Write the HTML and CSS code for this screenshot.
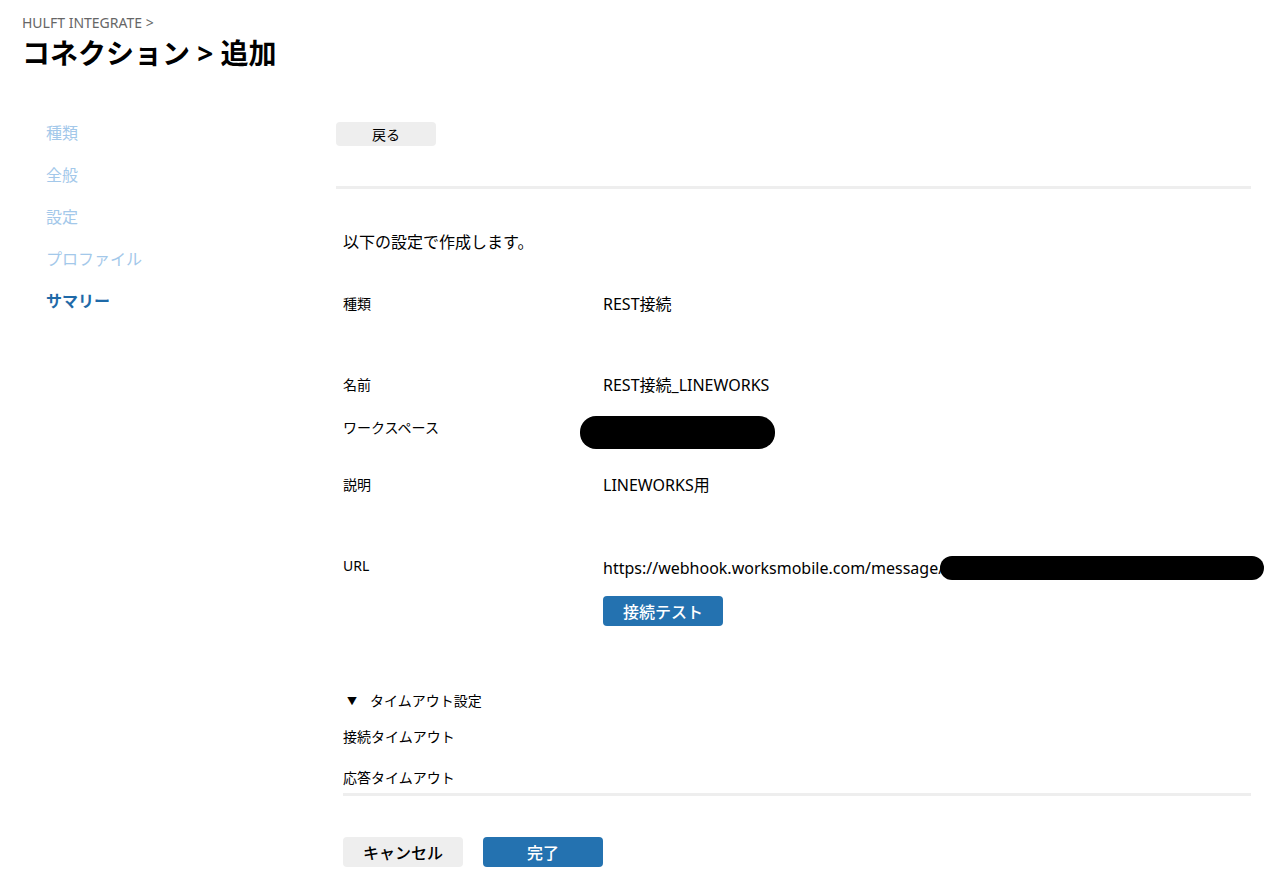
FILE: index.html
```html
<!DOCTYPE html>
<html lang="ja">
<head>
    <meta charset="UTF-8">
    <title>コネクション > 追加</title>
    <link rel="stylesheet" href="styles.css">
</head>
<body>
    <!-- Nagłówek -->
    <header class="page-header">
        <div class="breadcrumb">HULFT INTEGRATE &gt;</div>
        <h1 class="page-title">コネクション &gt; 追加</h1>
    </header>

    <div class="layout">
        <!-- Kroki -->
        <nav class="steps">
            <div class="step">種類</div>
            <div class="step">全般</div>
            <div class="step">設定</div>
            <div class="step">プロファイル</div>
            <div class="step step-active">サマリー</div>
        </nav>

        <main class="content">
            <button class="btn btn-gray btn-back">戻る</button>
            <hr class="divider">

            <section class="summary">
                <p class="intro">以下の設定で作成します。</p>

                <div class="row row-first">
                    <div class="label">種類</div>
                    <div class="value">REST接続</div>
                </div>
                <div class="row row-wide">
                    <div class="label">名前</div>
                    <div class="value">REST接続_LINEWORKS</div>
                </div>
                <div class="row row-workspace">
                    <div class="label">ワークスペース</div>
                    <div class="value"><span class="masked masked-workspace"></span></div>
                </div>
                <div class="row row-desc">
                    <div class="label">説明</div>
                    <div class="value">LINEWORKS用</div>
                </div>
                <div class="row row-wide">
                    <div class="label">URL</div>
                    <div class="value">
                        <div class="url">https://webhook.worksmobile.com/message/<span class="masked masked-url"></span></div>
                        <button class="btn btn-blue btn-test">接続テスト</button>
                    </div>
                </div>

                <div class="timeout-toggle"><span class="caret">▼</span>タイムアウト設定</div>
                <div class="timeout-item">接続タイムアウト</div>
                <div class="timeout-item timeout-item-last">応答タイムアウト</div>
                <hr class="divider divider-bottom">

                <div class="actions">
                    <button class="btn btn-gray btn-action">キャンセル</button>
                    <button class="btn btn-blue btn-action">完了</button>
                </div>
            </section>
        </main>
    </div>
</body>
</html>
```

FILE: styles.css
```css
/* Styl ogólny */
body {
    margin: 0;
    font-family: "Noto Sans", "Noto Sans CJK JP", sans-serif;
    background-color: #ffffff;
    color: #000000;
}

/* Nagłówek */
.page-header {
    padding: 14px 0 0 22px;
}

.breadcrumb {
    font-size: 14px;
    line-height: 18px;
    color: #666666;
}

.page-title {
    margin: 3px 0 0;
    font-size: 28px;
    line-height: 36px;
    font-weight: bold;
}

/* Układ */
.layout {
    display: flex;
    margin-top: 51px;
}

.steps {
    width: 290px;
    padding-left: 46px;
    flex-shrink: 0;
}

.step {
    font-size: 16px;
    line-height: 22px;
    margin-bottom: 20px;
    color: #a3c8ea;
}

.step-active {
    color: #1f6aa8;
    font-weight: bold;
}

.content {
    flex: 1;
    min-width: 0;
    margin-right: 31px;
}

/* Przyciski */
.btn {
    border: none;
    border-radius: 4px;
    font-family: inherit;
    padding: 0;
    cursor: pointer;
}

.btn-gray {
    background-color: #eeeeee;
    color: #000000;
}

.btn-blue {
    background-color: #2472b0;
    color: #ffffff;
}

.btn-back {
    width: 100px;
    height: 24px;
    font-size: 14px;
    display: block;
}

.divider {
    margin: 40px 0 0;
    border: none;
    height: 3px;
    background-color: #eeeeee;
}

/* Podsumowanie */
.summary {
    padding-left: 7px;
}

.intro {
    margin: 43px 0 0;
    font-size: 16px;
    line-height: 20px;
}

.row {
    display: grid;
    grid-template-columns: 260px 1fr;
    align-items: start;
}

.row-first {
    margin-top: 42px;
}

.row-wide {
    margin-top: 61px;
}

.row-workspace {
    margin-top: 21px;
}

.row-desc {
    margin-top: 26px;
}

.label {
    font-size: 14px;
    line-height: 20px;
}

.row-workspace .label {
    margin-top: 2px;
}

.value {
    font-size: 16px;
    line-height: 20px;
}

.url {
    white-space: nowrap;
    height: 20px;
}

.masked {
    display: inline-block;
    background-color: #000000;
}

.masked-workspace {
    width: 195px;
    height: 33px;
    border-radius: 16px;
    margin-left: -23px;
    vertical-align: top;
}

.masked-url {
    width: 324px;
    height: 24px;
    border-radius: 12px;
    vertical-align: -6px;
    margin-left: -4px;
}

.btn-test {
    display: block;
    margin-top: 20px;
    width: 120px;
    height: 30px;
    font-size: 16px;
    font-weight: 500;
}

/* Limit czasu */
.timeout-toggle {
    margin-top: 65px;
    font-size: 14px;
    line-height: 20px;
}

.caret {
    display: inline-block;
    width: 27px;
    padding-left: 4px;
    box-sizing: border-box;
    font-size: 10px;
    vertical-align: top;
}

.timeout-item {
    margin-top: 16px;
    font-size: 14px;
    line-height: 20px;
}

.timeout-item-last {
    margin-top: 21px;
}

.divider-bottom {
    margin-top: 5px;
}

.actions {
    display: flex;
    gap: 20px;
    margin-top: 41px;
    padding-bottom: 9px;
}

.btn-action {
    width: 120px;
    height: 30px;
    font-size: 16px;
    font-weight: 500;
}
```
